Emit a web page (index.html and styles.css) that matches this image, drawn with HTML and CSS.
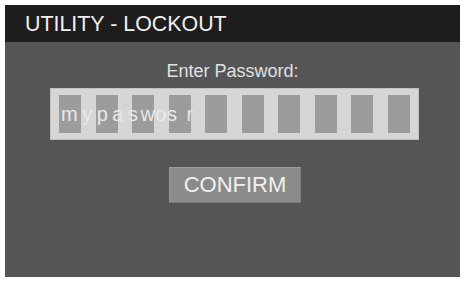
FILE: index.html
```html
<!DOCTYPE html>
<html>
<head>
<meta charset="utf-8">
<link rel="stylesheet" href="styles.css">
</head>
<body>
<div class="screen">
  <div class="header">UTILITY - LOCKOUT</div>
  <div class="content">
    <div class="prompt">Enter Password:</div>
    <div class="field">
      <div class="cell"></div>
      <div class="cell"></div>
      <div class="cell"></div>
      <div class="cell"></div>
      <div class="cell"></div>
      <div class="cell"></div>
      <div class="cell"></div>
      <div class="cell"></div>
      <div class="cell"></div>
      <div class="cell"></div>
      <div class="typed"><span class="wide">mypa</span><span class="mid">s</span><span class="tight">wos</span><span class="last">r</span></div>
    </div>
    <div class="button">CONFIRM</div>
  </div>
</div>
</body>
</html>
```
FILE: styles.css
```css
html, body {
  margin: 0;
  padding: 0;
  background: #ffffff;
}
body {
  font-family: "Liberation Sans", Arial, sans-serif;
}
.screen {
  margin: 5px 0 0 5px;
  width: 455px;
  height: 272px;
  display: flex;
  flex-direction: column;
  background: #555557;
}
.header {
  height: 37px;
  flex: none;
  background: #1f1c1d;
  color: #f0f0f0;
  font-size: 21.4px;
  line-height: 38px;
  padding-left: 20px;
}
.content {
  flex: 1;
  display: flex;
  flex-direction: column;
  padding-top: 19px;
}
.prompt {
  text-align: center;
  color: #e0e0e0;
  font-size: 18px;
  line-height: 20px;
}
.field {
  position: relative;
  margin: 7px 0 0 45px;
  width: 351px;
  height: 38px;
  padding: 6px 8px 6px 8px;
  background: #d6d6d6;
  border: 1px solid #c2c2c2;
  display: flex;
  justify-content: space-between;
}
.cell {
  width: 22px;
  height: 38px;
  background: #9c9c9c;
}
.typed {
  position: absolute;
  left: 10px;
  top: 15px;
  font-size: 20px;
  line-height: 20px;
  color: #e8e8e8;
  white-space: nowrap;
}
.wide { letter-spacing: 4.5px; }
.mid { letter-spacing: 2.5px; }
.tight { letter-spacing: 0.5px; }
.last { margin-left: 9px; }
.button {
  margin: 27px 0 0 164px;
  width: 132px;
  height: 36px;
  box-sizing: border-box;
  background: #8b8b8b;
  border-top: 1px solid #9e9e9e;
  border-left: 1px solid #979797;
  border-bottom: 1px solid #7c7c7c;
  border-right: 1px solid #7c7c7c;
  color: #f0f0f0;
  font-size: 22px;
  line-height: 34px;
  text-align: center;
}
```
